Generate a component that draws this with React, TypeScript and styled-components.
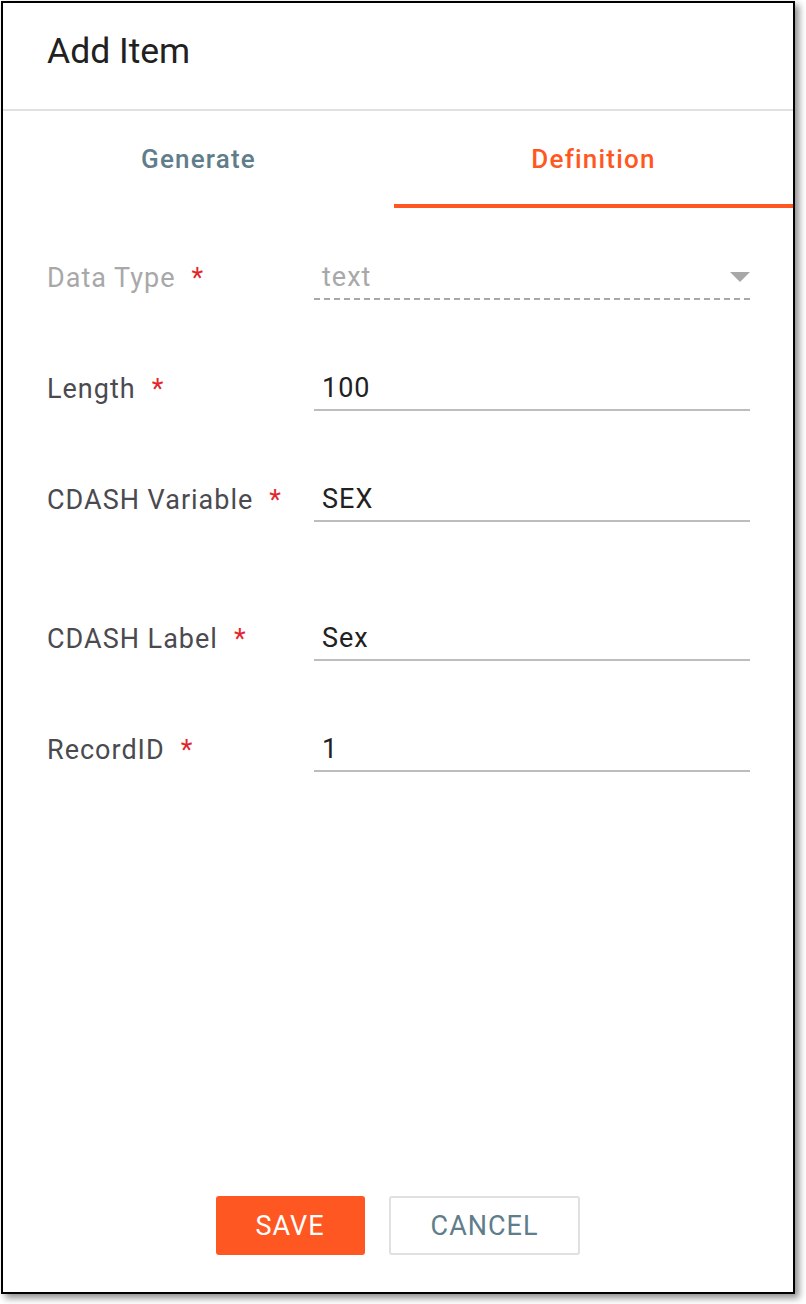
import styled, { createGlobalStyle } from 'styled-components';

const GlobalStyle = createGlobalStyle`
  html, body {
    margin: 0;
    padding: 0;
    background: #ffffff;
    font-family: Roboto, "Liberation Sans", Arial, sans-serif;
  }
`;

const Page = styled.div`
  width: 806px;
  height: 1304px;
  padding: 1px 0 0 1px;
  box-sizing: border-box;
`;

const Dialog = styled.div`
  width: 794px;
  height: 1293px;
  box-sizing: border-box;
  border: 2px solid #000000;
  background: #ffffff;
  box-shadow: 4px 4px 7px rgba(0, 0, 0, 0.45);
  display: flex;
  flex-direction: column;
`;

const Header = styled.div`
  height: 108px;
  box-sizing: border-box;
  display: flex;
  align-items: center;
  padding: 0 0 10px 44px;
  border-bottom: 2px solid #e0e0e0;
`;

const Title = styled.h1`
  margin: 0;
  font-size: 35.5px;
  font-weight: 400;
  color: #212121;
`;

const TabBar = styled.div`
  display: flex;
  height: 97px;
`;

const Tab = styled.button<{ $active?: boolean }>`
  flex: 0 0 ${({ $active }) => ($active ? '399px' : '391px')};
  border: none;
  background: none;
  padding: 2px 0 0;
  font-family: inherit;
  font-size: 26px;
  font-weight: 500;
  letter-spacing: 1.2px;
  color: ${({ $active }) => ($active ? '#ff5722' : '#607d8b')};
  border-bottom: 4px solid ${({ $active }) => ($active ? '#ff5722' : 'transparent')};
  cursor: pointer;
`;

const Form = styled.div`
  padding: 48px 43px 0 44px;
  display: flex;
  flex-direction: column;
`;

const Row = styled.div<{ $spaced?: boolean }>`
  display: grid;
  grid-template-columns: 267px 1fr;
  align-items: center;
  margin-bottom: ${({ $spaced }) => ($spaced ? '95px' : '67px')};
`;

const Label = styled.label<{ $disabled?: boolean }>`
  font-size: 27px;
  letter-spacing: 1px;
  color: ${({ $disabled }) => ($disabled ? '#a8a8a8' : '#4a4a4f')};
`;

const Star = styled.span`
  color: #e3262b;
  margin-left: 16px;
`;

const Field = styled.div<{ $disabled?: boolean }>`
  position: relative;
  height: 44px;
  box-sizing: border-box;
  display: flex;
  align-items: center;
  padding: 0 8px ${({ $disabled }) => ($disabled ? '2px' : '0')};
  font-size: 27px;
  letter-spacing: 1px;
  color: ${({ $disabled }) => ($disabled ? '#a8a8a8' : '#212121')};
  border-bottom: ${({ $disabled }) => ($disabled ? 'none' : '2px solid #bdbdbd')};
  background: ${({ $disabled }) =>
    $disabled
      ? 'repeating-linear-gradient(to right, #a8a8a8 0 6px, transparent 6px 10px) bottom left / 100% 2px no-repeat'
      : 'none'};
`;

const Arrow = styled.svg`
  position: absolute;
  right: 0;
  top: 16px;
  width: 20px;
  height: 10px;
`;

const Footer = styled.div`
  margin-top: auto;
  display: flex;
  justify-content: center;
  gap: 24px;
  padding-bottom: 37px;
`;

const Button = styled.button<{ $primary?: boolean }>`
  height: 59px;
  padding: 0 40px;
  border-radius: 3px;
  font-family: inherit;
  font-size: 27px;
  letter-spacing: 1px;
  cursor: pointer;
  background: ${({ $primary }) => ($primary ? '#ff5722' : '#ffffff')};
  color: ${({ $primary }) => ($primary ? '#ffffff' : '#607d8b')};
  border: ${({ $primary }) => ($primary ? 'none' : '2px solid #e0e0e0')};
`;

const fields = [
  { label: 'Length', value: '100' },
  { label: 'CDASH Variable', value: 'SEX', spaced: true },
  { label: 'CDASH Label', value: 'Sex' },
  { label: 'RecordID', value: '1' },
];

export default function App() {
  return (
    <Page>
      <GlobalStyle />
      <Dialog>
        <Header>
          <Title>Add Item</Title>
        </Header>
        <TabBar>
          <Tab>Generate</Tab>
          <Tab $active>Definition</Tab>
        </TabBar>
        <Form>
          <Row>
            <Label $disabled>
              Data Type<Star>*</Star>
            </Label>
            <Field $disabled>
              text
              <Arrow viewBox="0 0 20 10" aria-hidden="true">
                <path d="M0 0h20L10 10z" fill="#a8a8a8" />
              </Arrow>
            </Field>
          </Row>
          {fields.map((f) => (
            <Row key={f.label} $spaced={f.spaced}>
              <Label>
                {f.label}
                <Star>*</Star>
              </Label>
              <Field>{f.value}</Field>
            </Row>
          ))}
        </Form>
        <Footer>
          <Button $primary>SAVE</Button>
          <Button>CANCEL</Button>
        </Footer>
      </Dialog>
    </Page>
  );
}
